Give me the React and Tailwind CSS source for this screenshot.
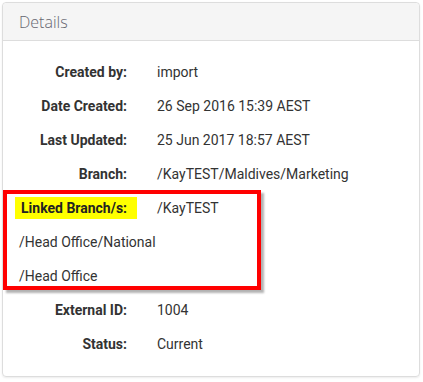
import React from "react";

const rows1 = [
  ["Created by:", "import"],
  ["Date Created:", "26 Sep 2016 15:39 AEST"],
  ["Last Updated:", "25 Jun 2017 18:57 AEST"],
  ["Branch:", "/KayTEST/Maldives/Marketing"],
];
const rows2 = [
  ["External ID:", "1004"],
  ["Status:", "Current"],
];

function Row({ label, value }) {
  return (
    <div className="flex items-center h-[34px]">
      <div className="w-[124px] text-right font-bold text-[#333]">{label}</div>
      <div className="ml-[30px] text-[#333]">{value}</div>
    </div>
  );
}

export default function App() {
  return (
    <div className="w-[423px] h-[382px] bg-white pt-[2px] pl-[2px]">
      <div
        className="w-[418px] h-[375px] border border-[#dddddd] rounded-[4px] shadow-[0_1px_2px_rgba(0,0,0,0.08)] text-[14px]"
        style={{ fontFamily: "Roboto, 'Liberation Sans', sans-serif" }}
      >
        <div
          className="h-[38px] bg-[#f5f5f5] border-b border-[#dddddd] rounded-t-[4px] flex items-center pl-[16px] text-[16px] text-[#666670]"
          style={{ fontFamily: "'Open Sans', sans-serif", fontWeight: 300 }}
        >
          Details
        </div>
        <div className="pt-[14px]">
          {rows1.map(([l, v]) => (
            <Row key={l} label={l} value={v} />
          ))}
          <div className="relative">
            <div className="flex items-center h-[34px]">
              <div className="ml-[12px] w-[122px] h-[22px] bg-[#ffff00] pl-[6px] flex items-center font-bold text-[#222]">
                Linked Branch/s:
              </div>
              <div className="ml-[20px] text-[#333]">/KayTEST</div>
            </div>
            <div className="flex items-center h-[34px] pl-[16px] text-[#333]">
              /Head Office/National
            </div>
            <div className="flex items-center h-[34px] pl-[16px] text-[#333]">
              /Head Office
            </div>
            <div className="absolute left-0 top-[-1px] w-[258px] h-[100px] border-[4px] border-[#ff0000] shadow-[3px_3px_2px_rgba(0,0,0,0.3)] pointer-events-none" />
          </div>
          {rows2.map(([l, v]) => (
            <Row key={l} label={l} value={v} />
          ))}
        </div>
      </div>
    </div>
  );
}
